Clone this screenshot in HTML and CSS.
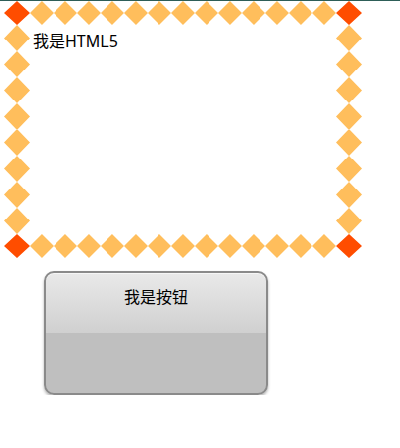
FILE: index.html
```html
<!DOCTYPE html>
<html lang="zh">
<head>
<meta charset="utf-8">
<title>border-image</title>
<link rel="stylesheet" href="styles.css">
</head>
<body>
<div class="topline"></div>
<div class="frame">我是HTML5</div>
<div class="btn">我是按钮</div>
</body>
</html>
```
FILE: styles.css
```css
html, body {
  margin: 0;
  padding: 0;
  background: #fff;
}
body {
  font-family: "Noto Sans", "Noto Sans CJK SC", sans-serif;
  font-size: 16px;
  color: #000;
}
.topline {
  height: 1px;
  background: #2e5e58;
}
.frame {
  margin-left: 4px;
  width: 358px;
  height: 257px;
  box-sizing: border-box;
  border-style: solid;
  border-width: 24px 26px;
  border-image: url("data:image/svg+xml,%3Csvg xmlns='http://www.w3.org/2000/svg' width='72' height='72' viewBox='0 0 72 72'%3E%3Cg fill='%23ff4d00'%3E%3Cpath d='M12 0l12 12-12 12-12-12z M60 0l12 12-12 12-12-12z M12 48l12 12-12 12-12-12z M60 48l12 12-12 12-12-12z'/%3E%3C/g%3E%3Cg fill='%23ffbe5c'%3E%3Cpath d='M36 0l12 12-12 12-12-12z M12 24l12 12-12 12-12-12z M60 24l12 12-12 12-12-12z M36 48l12 12-12 12-12-12z'/%3E%3C/g%3E%3C/svg%3E") 24 round;
  padding: 5px 3px;
  line-height: 22px;
}
.btn {
  margin: 13px 0 0 44px;
  width: 224px;
  height: 124px;
  box-sizing: border-box;
  border: 2px solid #8a8a8a;
  border-radius: 10px;
  background: linear-gradient(to bottom, #e9e9e9 0%, #d0d0d0 50%, #bfbfbf 50%, #bfbfbf 100%);
  box-shadow: 0 2px 3px rgba(0, 0, 0, 0.3), inset 0 1px 0 rgba(255, 255, 255, 0.6);
  text-align: center;
  padding-top: 13px;
  line-height: 22px;
}
```
